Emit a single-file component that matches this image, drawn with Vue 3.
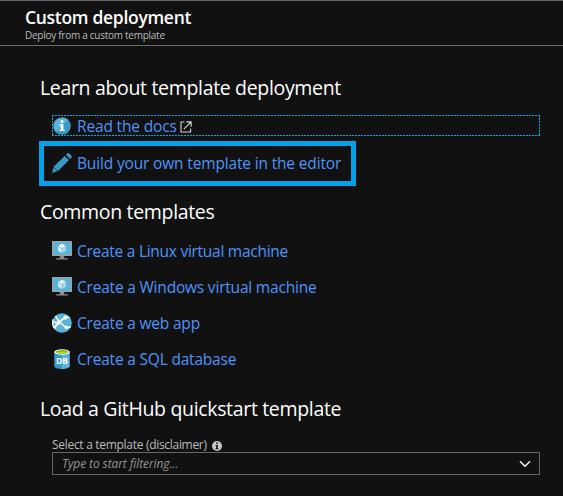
<script setup>
const templates = [
  { icon: 'vm', label: 'Create a Linux virtual machine', cls: 'linux' },
  { icon: 'vm', label: 'Create a Windows virtual machine', cls: 'windows' },
  { icon: 'web', label: 'Create a web app', cls: 'webapp' },
  { icon: 'db', label: 'Create a SQL database', cls: 'sql' },
]
</script>

<template>
  <main class="blade">
    <header class="head">
      <h1>Custom deployment</h1>
      <p>Deploy from a custom template</p>
    </header>

    <section class="learn">
      <h2>Learn about template deployment</h2>
      <a class="docs">
        <svg width="18" height="18" viewBox="0 0 18 18">
          <circle cx="9" cy="9" r="8.8" fill="#3999c6" />
          <path d="M2.8 15.2A8.8 8.8 0 0 1 15.2 2.8z" fill="#5cb3da" />
          <circle cx="9" cy="4.6" r="1.5" fill="#fff" />
          <path d="M6.5 7.2h3.9v5.6h1.2V14H6.400v-1.200h1.300V8.400H6.500z" fill="#fff" />
        </svg>
        <span class="label l-docs">Read the docs</span>
        <svg class="ext" width="12" height="12" viewBox="0 0 12 12" fill="none" stroke="#d8d8d8" stroke-width="1.100">
          <path d="M4.500 1H1v10h9.600V7.500M6.200.9h4.900v4.900M10.800 1.200L3.800 8.200" />
        </svg>
      </a>
      <a class="build">
        <svg width="20" height="20" viewBox="0 0 20 20">
          <path d="M2 13.200L12.700 2.900l4.200 4.200L6.400 17.800 0 20z" fill="#3999c6" />
          <path d="M13.900 1.800l1-1a1.900 1.900 0 0 1 2.700 0l1.600 1.600a1.900 1.900 0 0 1 0 2.700l-1 1z" fill="#3999c6" />
          <path d="M1.600 14.100l4.200 4.200" stroke="#111" stroke-width=".7" />
        </svg>
        <span class="label l-build">Build your own template in the editor</span>
      </a>
    </section>

    <section class="common">
      <h2>Common templates</h2>
      <a v-for="t in templates" :key="t.label" class="item">
        <svg v-if="t.icon === 'vm'" width="20" height="20" viewBox="0 0 20 20">
          <rect y="0" width="20" height="15" rx=".6" fill="#a0a1a2" />
          <rect x="1.200" y="1.300" width="17.600" height="12.300" fill="#59b4d9" />
          <path d="M7.800 15h4.400v2.300h2.300c1 0 1.700.5 2 1.300h-13c.3-.8 1-1.300 2-1.300h2.300z" fill="#8b8c8e" />
          <path d="M10 2.800l3.800 2.100L10 7 6.200 4.900z" fill="#fff" />
          <path d="M6 5.500l3.700 2.100v4.300L6 9.700z" fill="#d5edf6" />
          <path d="M14 5.500l-3.700 2.100v4.300L14 9.700z" fill="#a9d9ec" />
        </svg>
        <svg v-else-if="t.icon === 'web'" width="20" height="20" viewBox="0 0 20 20">
          <circle cx="10" cy="10" r="9.800" fill="#59b4d9" />
          <g fill="none" stroke="#fff">
            <path d="M13.500 4.600C10.500 6 7.700 8 5.800 10.300L2.200 15.400" stroke-width="2" />
            <path d="M3.600 3C6 7.800 9.500 11.400 14.300 14.600L18.600 14" stroke-width="1.600" />
            <path d="M13.500 4.300L17.300 4.500M.7 8.700l5.100 1.600" stroke-width="1.500" />
            <path d="M1 6.300C.2 9 .4 12.300 2.200 15" stroke-width="1.200" />
          </g>
          <circle cx="5.800" cy="10.200" r="2" fill="#fff" />
          <circle cx="13.500" cy="4.500" r="2" fill="#fff" />
          <circle cx="14.300" cy="14.500" r="1.800" fill="#fff" />
        </svg>
        <svg v-else width="20" height="20" viewBox="0 0 20 20">
          <path d="M2.200 3v14.200C2.200 18.800 5.700 20 10 20V3z" fill="#3999c6" />
          <path d="M10 20c4.300 0 7.800-1.200 7.800-2.800V3H10z" fill="#59b4d9" />
          <ellipse cx="10" cy="3" rx="7.800" ry="2.800" fill="#fff" />
          <ellipse cx="10" cy="2.900" rx="6.200" ry="1.900" fill="#7fba00" />
          <ellipse cx="10" cy="3.600" rx="4.600" ry="1.100" fill="#b8d432" />
          <text x="10" y="15" text-anchor="middle" class="dbtext">DB</text>
        </svg>
        <span class="label" :class="'l-' + t.cls">{{ t.label }}</span>
      </a>
    </section>

    <section class="github">
      <h2>Load a GitHub quickstart template</h2>
      <div class="caption">
        <span>Select a template (disclaimer)</span>
        <svg width="10" height="10" viewBox="0 0 10 10">
          <circle cx="5" cy="5" r="5" fill="#c8c8c8" />
          <path d="M4.200 1.500h1.600v1.500H4.200zM3.600 4h2.200v3.300h.7v1H3.500v-1h.7V5h-.6z" fill="#111" />
        </svg>
      </div>
      <div class="combo">
        <span class="placeholder">Type to start filtering...</span>
        <svg width="12" height="8" viewBox="0 0 12 8" fill="none" stroke="#fff" stroke-width="1.400">
          <path d="M1 1.200l5 5 5-5" />
        </svg>
      </div>
    </section>
  </main>
</template>

<style>
body {
  background: #111;
}
</style>

<style scoped>
.blade {
  box-sizing: border-box;
  width: 563px;
  height: 496px;
  overflow: hidden;
  background: #111;
  color: #fff;
  font-family: "Open Sans", "Noto Sans", sans-serif;
}
h1, h2, p {
  margin: 0;
  font-weight: 400;
  white-space: nowrap;
}
svg {
  display: block;
  flex: none;
}
.head {
  box-sizing: border-box;
  height: 46px;
  padding: 4px 0 0 25px;
  border-top: 1px solid #666;
  border-bottom: 1px solid #6a6a6a;
}
h1 {
  font-size: 17.5px;
  font-weight: 600;
  line-height: 24px;
  letter-spacing: -0.3px;
}
.head p {
  font-size: 10px;
  line-height: 14px;
  letter-spacing: -0.27px;
  color: #bbb;
  margin-top: -1px;
}
h2 {
  padding-left: 40px;
  font-size: 19.5px;
  line-height: 28px;
  letter-spacing: -0.33px;
}
.learn {
  padding-top: 28px;
}
.docs {
  display: flex;
  align-items: center;
  box-sizing: border-box;
  width: 488px;
  height: 21px;
  margin: 13px 0 0 52px;
  padding: 1px;
  background:
    repeating-linear-gradient(90deg, #00abec 0 2px, transparent 2px 3px) 0 0 / 100% 1px no-repeat,
    repeating-linear-gradient(90deg, #00abec 0 2px, transparent 2px 3px) 0 100% / 100% 1px no-repeat,
    repeating-linear-gradient(#00abec 0 2px, transparent 2px 3px) 0 0 / 1px 100% no-repeat,
    repeating-linear-gradient(#00abec 0 2px, transparent 2px 3px) 100% 0 / 1px 100% no-repeat;
}
.label {
  font-size: 15.5px;
  line-height: 22px;
  letter-spacing: -0.2px;
  color: #4c95fb;
  white-space: nowrap;
}
.l-docs,
.l-build {
  letter-spacing: -0.16px;
}
.l-linux {
  letter-spacing: -0.27px;
}
.docs .label {
  margin-left: 6px;
}
.ext {
  margin: 3px 0 0 3px;
}
.build {
  display: flex;
  align-items: center;
  box-sizing: border-box;
  width: 317px;
  height: 45px;
  margin: 5px 0 0 39px;
  padding: 0 0 2px 8px;
  border: 5px solid #00a2e8;
}
.build .label,
.item .label {
  margin-left: 5px;
}
.common {
  padding-top: 12px;
}
.item {
  display: flex;
  align-items: center;
  height: 36px;
  padding-left: 52px;
}
.common h2 {
  margin-bottom: 7px;
}
.dbtext {
  font: 700 8.500px "Open Sans", sans-serif;
  fill: #fff;
}
.github {
  padding-top: 18px;
}
.caption {
  display: flex;
  align-items: center;
  height: 16px;
  margin: 14px 0 0 52px;
  font-size: 12px;
  line-height: 16px;
  letter-spacing: -0.3px;
  color: #bbb;
  white-space: nowrap;
}
.caption svg {
  margin: 2px 0 0 5px;
}
.combo {
  display: flex;
  align-items: center;
  justify-content: space-between;
  box-sizing: border-box;
  width: 488px;
  height: 23px;
  margin: -1px 0 0 52px;
  padding: 0 8px 0 9px;
  border: 1px solid #666;
}
.placeholder {
  font-size: 12px;
  font-style: italic;
  line-height: 18px;
  letter-spacing: -0.1px;
  color: #949494;
}
</style>
